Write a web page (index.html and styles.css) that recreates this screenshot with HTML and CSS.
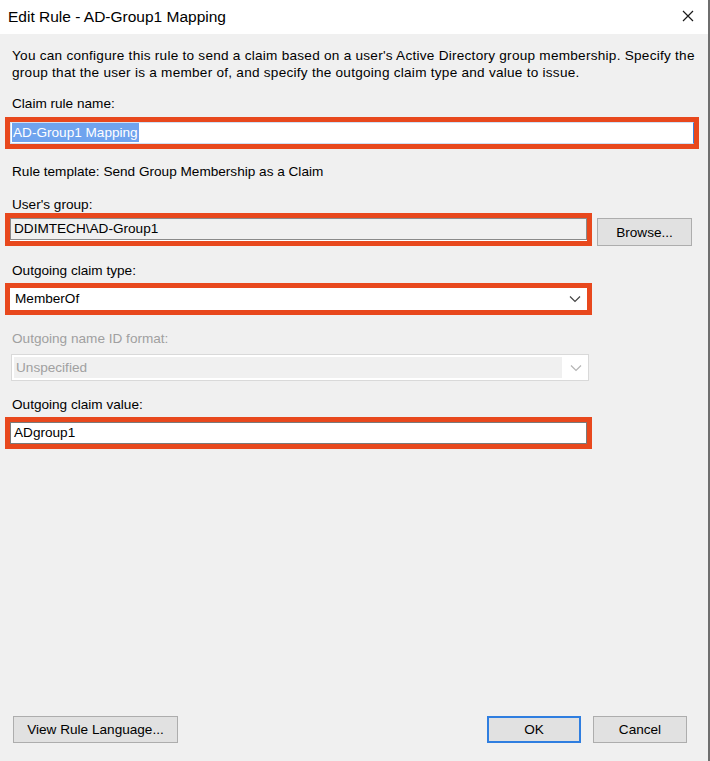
FILE: index.html
```html
<!DOCTYPE html>
<html lang="en">
<head>
    <meta charset="UTF-8">
    <title>Edit Rule - AD-Group1 Mapping</title>
    <link rel="stylesheet" href="styles.css">
</head>
<body>
    <div class="janela">
        <div class="barraTitulo">
            <span class="titulo">Edit Rule - AD-Group1 Mapping</span>
            <svg class="fechar" width="12" height="12" viewBox="0 0 12 12">
                <path d="M1 1 L11 11 M11 1 L1 11" stroke="#1a1a1a" stroke-width="1.2" fill="none"/>
            </svg>
        </div>
        <div class="conteudo">
            <p class="descricao">You can configure this rule to send a claim based on a user's Active Directory group membership. Specify the group that the user is a member of, and specify the outgoing claim type and value to issue.</p>

            <div class="rotulo r1">Claim rule name:</div>
            <div class="destaque largo">
                <div class="campo foco"><span class="selecao">AD-Group1 Mapping</span></div>
            </div>

            <div class="rotulo r2">Rule template: Send Group Membership as a Claim</div>

            <div class="rotulo r3">User's group:</div>
            <div class="linhaGrupo">
                <div class="destaque">
                    <div class="campo somenteLeitura">DDIMTECH\AD-Group1</div>
                </div>
                <button class="botao browse">Browse...</button>
            </div>

            <div class="rotulo r4">Outgoing claim type:</div>
            <div class="destaque">
                <div class="campo combo">
                    <span>MemberOf</span>
                    <svg width="12" height="8" viewBox="0 0 12 8"><path d="M1 1.5 L6 6.5 L11 1.5" stroke="#444" stroke-width="1.2" fill="none"/></svg>
                </div>
            </div>

            <div class="rotulo r5 desabilitado">Outgoing name ID format:</div>
            <div class="comboDesabilitado">
                <div class="areaTexto">Unspecified</div>
                <svg width="12" height="8" viewBox="0 0 12 8"><path d="M1 1.5 L6 6.5 L11 1.5" stroke="#b5b5b5" stroke-width="1.2" fill="none"/></svg>
            </div>

            <div class="rotulo r6">Outgoing claim value:</div>
            <div class="destaque">
                <div class="campo">ADgroup1</div>
            </div>
        </div>
        <div class="rodape">
            <button class="botao linguagem">View Rule Language...</button>
            <div class="acoes">
                <button class="botao ok">OK</button>
                <button class="botao cancelar">Cancel</button>
            </div>
        </div>
    </div>
</body>
</html>
```

FILE: styles.css
```css
*{
    box-sizing: border-box;
}
html, body{
    margin: 0;
    padding: 0;
}
body{
    width: 710px;
    height: 761px;
    overflow: hidden;
    font-family: "Liberation Sans", Arial, sans-serif;
    color: #000;
}
.janela{
    width: 710px;
    height: 761px;
    background: #f0f0f0;
    border-right: 2px solid #6e6e6e;
    display: flex;
    flex-direction: column;
}
.barraTitulo{
    height: 34px;
    background: #fff;
    display: flex;
    align-items: center;
    justify-content: space-between;
    padding: 0 14px 0 8px;
}
.titulo{
    font-size: 15.5px;
    color: #000;
}
.fechar{
    margin-top: -2px;
}
.conteudo{
    padding: 13px 6px 0 5px;
}
.descricao{
    margin: 0 0 0 7px;
    font-size: 13.6px;
    line-height: 17px;
    letter-spacing: 0.25px;
}
.rotulo{
    font-size: 13.6px;
    line-height: 17px;
    margin-left: 7px;
}
.r1{ margin-top: 14px; margin-bottom: 5px; }
.r2{ margin-top: 14px; }
.r3{ margin-top: 16px; margin-bottom: 0; }
.r4{ margin-top: 16px; margin-bottom: 4px; }
.r5{ margin-top: 15px; margin-bottom: 7px; }
.r6{ margin-top: 15px; margin-bottom: 4px; }
.desabilitado{
    color: #a0a0a0;
}
.destaque{
    width: 587px;
    height: 32px;
    border: 5px solid #e8481d;
    background: #fff;
}
.destaque.largo{
    width: 694px;
}
.campo{
    height: 22px;
    border: 1px solid #7a7a7a;
    background: #fff;
    font-size: 13.6px;
    line-height: 20px;
    padding-left: 3px;
    white-space: nowrap;
}
.campo.foco{
    border-color: #cfe0f5;
    border-right-color: #3a7fd8;
    padding-left: 1px;
}
.selecao{
    background: #6fa3ee;
    color: #fff;
    display: inline-block;
    line-height: 19px;
    padding: 0 1px;
}
.campo.somenteLeitura{
    background: #f0f0f0;
    border-color: #8a8a8a;
}
.linhaGrupo{
    display: flex;
    align-items: flex-end;
    gap: 5px;
}
.destaque:has(.somenteLeitura){
    height: 33px;
}
.combo{
    display: flex;
    align-items: center;
    justify-content: space-between;
    padding-left: 4px;
    padding-right: 5px;
    border-color: #fff;
}
.comboDesabilitado{
    width: 578px;
    height: 27px;
    margin-left: 6px;
    border: 1px solid #d9d9d9;
    background: #fff;
    display: flex;
    align-items: center;
    padding: 2px 6px 2px 2px;
}
.areaTexto{
    flex: 1;
    height: 21px;
    background: #f0f0f0;
    color: #a0a0a0;
    font-size: 13.6px;
    line-height: 21px;
    padding-left: 2px;
    margin-right: 8px;
}
.botao{
    font-family: "Liberation Sans", Arial, sans-serif;
    font-size: 13.6px;
    color: #000;
    background: #e1e1e1;
    border: 1px solid #adadad;
    height: 27px;
    padding: 0;
}
.browse{
    width: 95px;
    margin-bottom: 0;
    height: 28px;
}
.rodape{
    margin-top: auto;
    display: flex;
    justify-content: space-between;
    align-items: center;
    padding: 0 21px 18px 13px;
}
.linguagem{
    width: 165px;
}
.acoes{
    display: flex;
    gap: 12px;
}
.ok{
    width: 94px;
    border: 2px solid #2f7ee0;
}
.cancelar{
    width: 94px;
}
```
